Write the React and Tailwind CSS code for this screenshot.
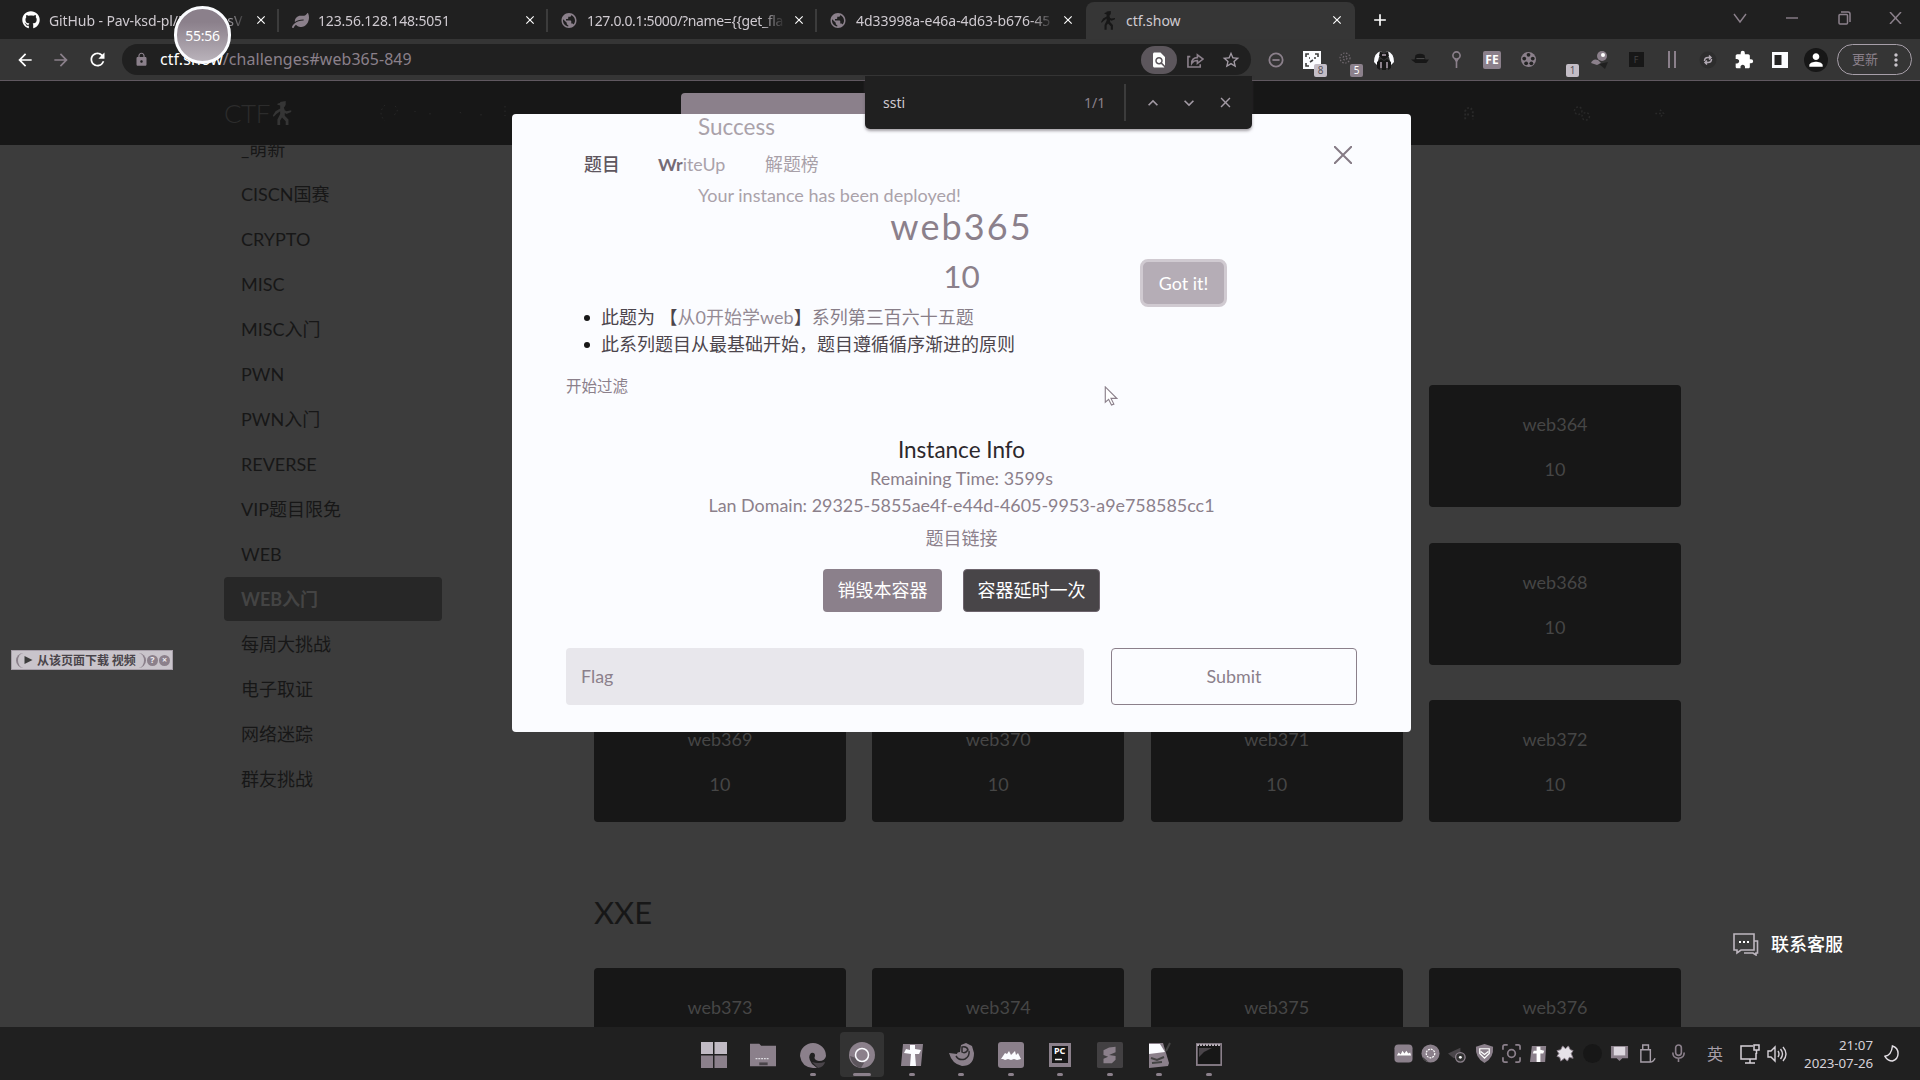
import React from "react";
import { FaGithub, FaLeaf } from "react-icons/fa";
import {
  MdPublic, MdArrowBack, MdArrowForward, MdRefresh, MdLock, MdFindInPage, MdStarBorder,
  MdExtension, MdPerson, MdClose, MdAdd, MdMoreVert, MdKeyboardArrowUp, MdKeyboardArrowDown,
} from "react-icons/md";

const Runner = ({ className }) => (
  <svg viewBox="0 0 20 26" className={className} fill="currentColor">
    <path d="M8 1l6-1v4l-1 2-1 1 1 3 2 1 5-1v2l-5 2-2-1v3l4 4v7h-3v-5l-4-4-2 3v6H5v-7l3-6v-3l-4 3-3 3-1-1 3-5 5-3V5L5 4V3l3-1z" />
  </svg>
);

const tabs = [
  { icon: <FaGithub size={18} className="text-white" />, title: "GitHub - Pav-ksd-pl/ModulesV", fit: "tracking-[-0.100px]", close: true },
  { icon: <FaLeaf size={17} className="text-[#8b808b]" />, title: "123.56.128.148:5051", fit: "tracking-[-0.180px]", close: true },
  { icon: <MdPublic size={19} className="text-[#8b808b]" />, title: "127.0.0.1:5000/?name={{get_fla", fit: "tracking-[-0.350px]", close: true },
  { icon: <MdPublic size={19} className="text-[#8b808b]" />, title: "4d33998a-e46a-4d63-b676-45", fit: "tracking-[-0.050px]", close: true },
];

function TabStrip() {
  return (
    <div className="flex h-[39px] bg-[#202020] pl-[10px]">
      {tabs.map((t, i) => (
        <div key={i} className="flex h-[39px] w-[269px] items-center pl-[12px] pt-px">
          <span className="flex w-[18px] justify-center">{t.icon}</span>
          <span className={"ml-[9px] w-[198px] overflow-hidden whitespace-nowrap text-[14px] text-[#cfcad0] [mask-image:linear-gradient(to_right,black_88%,transparent)] " + t.fit}>{t.title}</span>
          <MdClose size={14} className="ml-[7px] text-white" />
          <span className={"ml-auto h-[23px] w-[2px] " + (i < 3 ? "bg-[#3c3c3c]" : "bg-transparent")} />
        </div>
      ))}
      <div className="mt-[2px] flex h-[37px] w-[269px] items-center rounded-t-[8px] bg-[#363636] pb-px pl-[15px]">
        <Runner className="h-[20px] w-[14px] text-[#171717]" />
        <span className="ml-[11px] w-[200px] text-[14px] text-[#cfcad0]">ctf.show</span>
        <MdClose size={14} className="ml-[4px] text-white" />
      </div>
      <div className="flex w-[50px] items-center justify-center pt-px text-white"><MdAdd size={20} /></div>
      <div className="ml-auto flex h-[35px] items-center text-[#8b808b]">
        <svg className="h-[12px] w-[52px]" viewBox="-20 0 52 12" fill="none" stroke="currentColor" strokeWidth="1.400"><path d="M0 2l6 8 6-8" /></svg>
        <svg className="h-[12px] w-[52px]" viewBox="-20 0 52 12" fill="none" stroke="currentColor" strokeWidth="1.400"><path d="M0 6h12" /></svg>
        <svg className="h-[14px] w-[52px]" viewBox="-20 0 52 14" fill="none" stroke="currentColor" strokeWidth="1.500"><rect x="1" y="3.500" width="8.500" height="9.500" rx="1" /><path d="M3 1h7q2 0 2 2v8" /></svg>
        <svg className="h-[12px] w-[50px]" viewBox="-19 0 50 12" fill="none" stroke="currentColor" strokeWidth="1.500"><path d="M1 0l11 12M12 0L1 12" /></svg>
      </div>
    </div>
  );
}

const Badge = ({ children, tone }) => (
  <span className={"absolute -right-[6px] -bottom-[8px] flex h-[13px] w-[13px] items-center justify-center rounded-[2px] text-[10px] leading-none " + tone}>{children}</span>
);

const extensions = [
  <svg viewBox="0 0 18 18" className="h-[16px] w-[16px]" fill="none" stroke="#8b808b" strokeWidth="2"><circle cx="9" cy="9" r="7.500" /><path d="M5 9h8" /></svg>,
  <span className="relative h-[18px] w-[18px] bg-[#fbfcff]">
    <svg viewBox="0 0 18 18" className="h-[18px] w-[18px]" fill="none" stroke="#3c3c3c" strokeWidth="1.600"><path d="M3 6V3h3M12 3h3v3M3 12v3h3M6 7h1M11 7h2M7 11l3-2" /></svg>
    <Badge tone="bg-[#c3bdc6] text-[#5a525a]">8</Badge>
  </span>,
  <span className="relative h-[18px] w-[18px]">
    <svg viewBox="0 0 18 18" className="h-[18px] w-[18px]" fill="none" stroke="#70686f" strokeWidth="1.200" strokeDasharray="1.500 1.500"><circle cx="6" cy="7" r="5" /><circle cx="6" cy="7" r="2" /></svg>
    <Badge tone="bg-[#8b808b] text-white">5</Badge>
  </span>,
  <svg viewBox="0 0 20 20" className="h-[20px] w-[20px]"><path d="M7 1Q0 3 0 12l3 3 2-8 3-3zM13 1q7 2 7 11l-3 3-2-8-3-3z" fill="#fbfcff" /><path d="M6 1l4 3 4-3 1 5-5 4-5-4zM3 12l4-3 3 2 3-2 4 3v6l-3 2v-5h-2v5H8v-5H6v5l-3-2z" fill="#171717" /><path d="M8 4h4v2H8zM6 12h2v6H6zM12 12h2v6h-2z" fill="#8b808b" /></svg>,
  <svg viewBox="0 0 20 14" className="h-[13px] w-[18px]"><path d="M5 2q5-3 10 0l1 5h4l-3 4H5L0 7h4z" fill="#171717" /><path d="M6 6h9" stroke="#555" /></svg>,
  <svg viewBox="0 0 12 20" className="h-[18px] w-[11px]" fill="none" stroke="#8b808b" strokeWidth="1.800"><circle cx="6" cy="5" r="4" /><path d="M4 8l2 4 2-4M6 11v8" /></svg>,
  <span className="flex h-[18px] w-[18px] items-center justify-center rounded-[2px] bg-[#8b808b] text-[12px] font-bold leading-none text-white">FE</span>,
  <svg viewBox="0 0 18 18" className="h-[17px] w-[17px]"><circle cx="9" cy="9" r="8" fill="#8b808b" /><g fill="#242424"><circle cx="9" cy="4" r="2" /><circle cx="4.500" cy="8" r="2" /><circle cx="13.500" cy="8" r="2" /><circle cx="6.500" cy="13" r="2" /><circle cx="12" cy="13" r="2" /></g></svg>,
  <span className="relative h-[18px] w-[18px]"><Badge tone="bg-[#c3bdc6] text-[#5a525a]">1</Badge></span>,
  <svg viewBox="0 0 18 18" className="h-[18px] w-[18px]"><circle cx="11" cy="5" r="5" fill="#8b808b" /><path d="M0 12q2-5 7-3l3 3-4 2z" fill="#8b808b" /><path d="M8 13l9-2-3 7z" fill="#202020" /><circle cx="12" cy="4" r="2" fill="#fff" /></svg>,
  <span className="flex h-[15px] w-[15px] items-center justify-center bg-[#171717] text-[9px] text-[#444]">F</span>,
  <span className="flex gap-[4px]"><i className="h-[17px] w-[2px] bg-[#8b808b]" /><i className="h-[17px] w-[2px] bg-[#8b808b]" /></span>,
  <svg viewBox="0 0 18 18" className="h-[18px] w-[18px]"><circle cx="9" cy="9" r="8.500" fill="#2d2d2d" /><path d="M5.500 10q0-3.500 3.500-3.500h3M12.500 8q0 3.500-3.500 3.500H6M10 4.500l2 2-2 2M8 13.500l-2-2 2-2" fill="none" stroke="#b0a8b2" strokeWidth="1.500" /></svg>,
  <MdExtension size={20} className="text-white" />,
  <svg viewBox="0 0 18 18" className="h-[18px] w-[18px]"><path d="M1 1h16v16H1z" fill="#fbfcff" /><path d="M3.500 4h7v10h-7z" fill="#242424" /></svg>,
  <span className="flex h-[24px] w-[24px] items-center justify-center rounded-full bg-[#171717]"><MdPerson size={20} className="text-white" /></span>,
];

function Toolbar() {
  return (
    <div className="flex h-[42px] items-center border-b border-[#605860] bg-[#353535] pl-[6px]">
      <span className="flex w-[37px] justify-center"><MdArrowBack size={20} className="text-white" /></span>
      <span className="flex w-[36px] justify-center"><MdArrowForward size={20} className="text-[#8b808b]" /></span>
      <span className="flex w-[36px] justify-center"><MdRefresh size={21} className="text-white" /></span>
      <div className="ml-[7px] flex h-[31px] w-[1129px] items-center rounded-full bg-[#202020] pl-[12px]">
        <MdLock size={15} className="text-[#8b808b]" />
        <span className="ml-[11px] text-[15.900px] tracking-[0.100px] text-[#8b808b]"><span className="text-white">ctf.show</span>/challenges#web365-849</span>
        <span className="ml-auto flex h-[28px] w-[36px] items-center justify-center rounded-full bg-[#5c565c] text-white"><MdFindInPage size={18} /></span>
        <span className="flex w-[36px] justify-center">
          <svg viewBox="0 0 18 18" className="h-[17px] w-[17px]" fill="none" stroke="#8b808b" strokeWidth="1.700"><path d="M3.500 6H1v11h13v-3M5 13q0-6 6-6V4l6 4.500-6 4.500V10q-4 0-6 3z" /></svg>
        </span>
        <span className="mr-[2px] flex w-[36px] justify-center"><MdStarBorder size={20} className="text-[#a29aa4]" /></span>
      </div>
      <div className="ml-[7px] flex">
        {extensions.map((e, i) => (
          <span key={i} className="flex h-[30px] w-[36px] items-center justify-center">{e}</span>
        ))}
      </div>
      <div className="ml-[3px] flex h-[31px] w-[75px] items-center rounded-full border border-[#a79fa9] pl-[14px] text-[13px] text-[#8b808b]">
        更新<MdMoreVert size={20} className="ml-[8px] text-[#c9c4cb]" />
      </div>
    </div>
  );
}

const categories = ["_萌新", "CISCN国赛", "CRYPTO", "MISC", "MISC入门", "PWN", "PWN入门", "REVERSE", "VIP题目限免", "WEB", "WEB入门", "每周大挑战", "电子取证", "网络迷踪", "群友挑战"];

const Card = ({ name, className = "" }) => (
  <div className={"h-[122px] rounded-[4px] bg-[#171717] pt-[25px] text-center text-[18px] text-[#464646] " + className}>
    <div className="h-[28px] leading-[28px]">{name}</div>
    <div className="mt-[17px] h-[28px] leading-[28px]">10</div>
  </div>
);

function Site() {
  return (
    <div className="h-[946px] overflow-hidden bg-[#3c3c3c] font-['Lato','Noto_Sans_CJK_SC',sans-serif]">
      <nav className="flex h-[64px] items-center bg-[#171717] pl-[224px] text-[#353535]">
        <span className="text-[26px] font-light tracking-[-0.500px] text-[#2c2c2c]">CTF</span>
        <Runner className="ml-[2px] h-[24px] w-[20px]" />
        <svg viewBox="0 0 130 20" className="ml-[85px] h-[20px] w-[130px]" fill="none" stroke="#2b2b2b" strokeDasharray="1.500 3"><path d="M8 2q-8 8 0 16M18 3q5 5-1 9M38 8v1M53 10v3M83 9l2 3M104 11v2M128 3v10" /></svg>
        <div className="ml-auto mr-[255px] flex gap-[36px] text-[#292929]">
          <svg viewBox="0 0 12 16" className="mr-[62px] h-[15px] w-[12px]" fill="none" stroke="currentColor" strokeWidth="2" strokeDasharray="2 2"><path d="M2 14V5q4-6 8 0v9M4 9h4" /></svg>
          <svg viewBox="0 0 18 16" className="h-[15px] w-[18px]" fill="none" stroke="currentColor" strokeWidth="1.500" strokeDasharray="2 2"><circle cx="5" cy="5" r="4" /><circle cx="13" cy="11" r="4" /></svg>
          <svg viewBox="0 0 12 16" className="ml-[26px] h-[15px] w-[12px]" fill="none" stroke="currentColor" strokeWidth="1.500" strokeDasharray="2 2"><path d="M2 8h8M7 4l4 4-4 4" /></svg>
        </div>
      </nav>
      <div className="flex h-[882px] overflow-hidden pl-[224px]">
        <aside className="-mt-[18px] flex w-[218px] flex-col gap-px text-[18px] text-[#171717]">
          {categories.map((c) => (
            <div key={c} className={"flex h-[44px] shrink-0 items-center rounded-[4px] pl-[17px] pt-px " + (c === "WEB入门" ? "bg-[#272727] font-bold text-[#444444]" : "")}>{c}</div>
          ))}
        </aside>
        <main className="ml-[152px] w-[1087px] pt-[240px]">
          <div className="grid grid-cols-4 gap-x-[26.500px] gap-y-[35.500px]">
            <Card name="web364" className="col-start-4" />
            <Card name="web368" className="col-start-4" />
            {["web369", "web370", "web371", "web372"].map((n) => <Card key={n} name={n} />)}
          </div>
          <h3 className="mt-[65px] h-[50px] text-[31px] leading-[50px] text-[#171717]">XXE</h3>
          <div className="mt-[31px] grid grid-cols-4 gap-x-[26.500px]">
            {["web373", "web374", "web375", "web376"].map((n) => (
              <div key={n} className="h-[59px] rounded-t-[4px] bg-[#171717] pt-[25px] text-center text-[18px] leading-[28px] text-[#464646]">{n}</div>
            ))}
          </div>
        </main>
      </div>
    </div>
  );
}

function Modal() {
  return (
    <div className="absolute left-[512px] top-[114px] h-[618px] w-[899px] rounded-[4px] bg-[#fbfcff] px-[54px] pt-[26px] font-['Lato','Noto_Sans_CJK_SC',sans-serif] text-[17.900px] text-[#8b808b]">
      <div className="flex h-[48px] items-center pl-[18px] pt-px">
        <span className="w-[74px] font-medium text-[#5e565e]">题目</span>
        <span className="w-[107px] text-[#aaa2aa]"><b className="text-[#756b75]">Wr</b>iteUp</span>
        <span className="text-[#a8a0a8]">解题榜</span>
        <svg viewBox="0 0 18 18" className="mb-[20px] ml-auto mr-[5px] h-[18px] w-[18px]" fill="none" stroke="#857a85" strokeWidth="2"><path d="M0 0l18 18M18 0L0 18" /></svg>
      </div>
      <h2 className="mt-4 h-12 text-center text-[36px] leading-[45px] tracking-[2.100px]">web365</h2>
      <h3 className="h-12 text-center text-[31.500px] leading-[48px]">10</h3>
      <ul className="mt-1 pl-[35px] text-[18px] leading-[27px] text-[#4c454c]">
        <li className="relative before:absolute before:-left-[17px] before:top-[11px] before:h-[6px] before:w-[6px] before:rounded-full before:bg-[#171717]">此题为 【<span className="text-[#958b95]">从0开始学web</span>】<span className="text-[#887e88]">系列第三百六十五题</span></li>
        <li className="relative before:absolute before:-left-[17px] before:top-[11px] before:h-[6px] before:w-[6px] before:rounded-full before:bg-[#171717]">此系列题目从最基础开始，题目遵循循序渐进的原则</li>
      </ul>
      <p className="mt-[14px] h-7 text-[15.500px] leading-7">开始过滤</p>
      <h5 className="mt-[36px] h-7 text-center text-[22.500px] leading-7 text-[#2c282c]">Instance Info</h5>
      <p className="h-7 text-center leading-[29px]">Remaining Time: 3599s</p>
      <p className="h-[26px] text-center leading-[26px]">Lan Domain: 29325-5855ae4f-e44d-4605-9953-a9e758585cc1</p>
      <p className="mt-[7px] h-[26px] text-center text-[18px] leading-[26px]">题目链接</p>
      <div className="mt-[18px] flex h-[43px] justify-center gap-[21px] text-[18px] text-white">
        <button className="w-[119px] rounded-[4px] bg-[#8b808b]">销毁本容器</button>
        <button className="w-[137px] rounded-[4px] border border-[#6d646d] bg-[#484548]">容器延时一次</button>
      </div>
      <div className="mt-[36px] flex h-[57px] gap-[27px]">
        <div className="flex w-[518px] items-center rounded-[4px] bg-[#e8e7ec] pl-[15px]">Flag</div>
        <button className="w-[246px] rounded-[4px] border border-[#8b808b]">Submit</button>
      </div>
    </div>
  );
}

function Toast() {
  return (
    <>
      <div className="absolute left-[681px] top-[93px] h-[21px] w-[184px] rounded-tl-[4px] bg-[#8b808b]" />
      <div className="absolute left-[698px] top-[113px] w-[530px] font-['Lato',sans-serif] text-[#aaa2aa]">
        <div className="h-[28px] text-[22.500px] leading-[28px]">Success</div>
        <div className="mt-[40px] h-[28px] text-[18px] leading-[28px]">Your instance has been deployed!</div>
        <div className="ml-auto mr-[1px] mt-[50px] flex h-[48px] w-[87px] items-center justify-center rounded-[8px] border-[3px] border-[#d0cad1] bg-[#b5adb6] pt-px text-[17.900px] text-white">Got it!</div>
      </div>
    </>
  );
}

function FindBar() {
  return (
    <div className="absolute left-[865px] top-[76px] flex h-[53px] w-[387px] items-center rounded-b-[5px] bg-[#202020] pl-[18px] text-[14px] text-[#a29aa4] shadow-[0_2px_3px_rgba(80,72,80,0.5)]">
      <span className="w-[201px] text-[#cfcad0]">ssti</span>
      <span className="w-[40px] text-[#8b808b]">1/1</span>
      <span className="h-[37px] w-[2px] bg-[#3c3c3c]" />
      <MdKeyboardArrowUp size={20} className="ml-[17px]" />
      <MdKeyboardArrowDown size={20} className="ml-[16px]" />
      <MdClose size={17} className="ml-[18px]" />
    </div>
  );
}

const P = "#8b808b";
const apps = [
  <svg viewBox="0 0 26 26"><path d="M0 0h12v12H0zM13.500 0H26v12H13.500z" fill="#c0bac3" /><path d="M0 13.500h12V26H0zM13.500 13.500H26V26H13.500z" fill={P} /></svg>,
  <svg viewBox="0 0 28 26"><path d="M0 1h10l2 2h16v22H0z" fill={P} /><path d="M6 17h15" stroke="#fbfcff" strokeDasharray="2 1" /><path d="M10 21h9v3h-9z" fill="#4a454a" /></svg>,
  <svg viewBox="0 0 26 26"><path d="M0 14A13 13 0 1 1 26 14q-1 5-7 5-6-1-4-5 0-4-4-3-4 4 1 11l5 4Q2 27 0 14z" fill={P} /><path d="M12 20l6 6q6-1 7-6-7 2-13 0z" fill="#4a454a" /></svg>,
  <svg viewBox="0 0 26 26"><circle cx="13" cy="13" r="13" fill={P} /><path d="M1 14q2 10 11 12l3-5-8-5z" fill="#5c555c" /><circle cx="13" cy="13" r="6.500" fill={P} stroke="#fbfcff" strokeWidth="1.500" /></svg>,
  <svg viewBox="0 0 26 26"><path d="M4 2h20l-2 22H2z" fill={P} /><path d="M11 3h5v4l6 1-2 4h-4l1 12h-6l1-12-7-1 2-4 4 1z" fill="#fbfcff" /></svg>,
  <svg viewBox="0 0 26 26"><path d="M1 11l8 1q0-2 3-2l1-7 5-2 6 3 2 7q0 13-12 13Q4 22 1 11z" fill={P} /><path d="M8 14q3 5 9 3 5-3 4-8M14 5q5-1 6 3-3 4-6 2z" fill="none" stroke="#2c2a2c" strokeWidth="1.500" /></svg>,
  <svg viewBox="0 0 26 26"><rect width="26" height="26" rx="3" fill={P} /><path d="M3 17l4-6 2 1 2-3 2 4 4-4 1 4 2-2 3 6-4 1-3-1-3 1-3-1-3 1-2-1z" fill="#fbfcff" /></svg>,
  <svg viewBox="0 0 26 26"><rect x="2" y="1" width="22" height="24" fill={P} /><rect x="5" y="4" width="16" height="17" fill="#171717" /><text x="7" y="12" fontSize="9" fontWeight="700" fill="#fff">PC</text><path d="M8 17.500h7" stroke="#fff" strokeWidth="1.500" /></svg>,
  <svg viewBox="0 0 28 28"><rect width="28" height="28" rx="2" fill="#424042" /><path d="M20 5v6l-7 3 7 1v4l-4 4H7v-5l5-2-5-2V9l6-3z" fill={P} /></svg>,
  <svg viewBox="0 0 26 26"><path d="M3 1h14l6 20-1 3-19 2z" fill={P} /><path d="M3 2h11l5 8-16 2z" fill="#fbfcff" /><path d="M5 16l6 2 7-3M6 21l10-1M20 9l4-8" fill="none" stroke="#444" strokeWidth="2" /></svg>,
  <svg viewBox="0 0 26 26"><rect x=".8" y="2" width="24.500" height="21" fill="#171717" stroke={P} strokeWidth="1.800" /><path d="M1 3h24" stroke="#b5adb6" strokeWidth="2" strokeDasharray="2 1" /><path d="M3 6h13l-8 4-5 5z" fill="#4a454a" /></svg>,
];

const tray = [
  <svg viewBox="0 0 20 20"><rect x=".5" y=".5" width="19" height="19" rx="4" fill={P} /><path d="M3 12l2-3 2 2 2-4 2 3 2-3 2 3 2-1 1 3z" fill="#fff" /></svg>,
  <svg viewBox="0 0 20 20"><circle cx="10" cy="10" r="9.500" fill={P} /><circle cx="10" cy="10" r="4.500" fill="none" stroke="#fff" strokeWidth="1.300" strokeDasharray="2 1" /><path d="M1 13l7 6q-6-1-7-6z" fill="#444" /></svg>,
  <svg viewBox="0 0 20 20"><path d="M0 10l13-6v8l-7 3z" fill="#4a464a" /><circle cx="13" cy="14" r="5" fill="#333" stroke={P} strokeWidth="1.400" /><circle cx="13" cy="14" r="1.500" fill="#fff" /></svg>,
  <svg viewBox="0 0 20 20"><path d="M10 0l9 3q1 12-9 17Q0 15 1 3z" fill={P} /><path d="M5 5h10v5l-5 5-5-5zM6 8l4 3 4-3" fill="none" stroke="#fff" strokeWidth="1.300" /></svg>,
  <svg viewBox="0 0 20 20" fill="none" stroke={P} strokeWidth="1.800"><path d="M1 6V3q0-2 2-2h3M14 1h3q2 0 2 2v3M19 14v3q0 2-2 2h-3M6 19H3q-2 0-2-2v-3" /><circle cx="10" cy="10" r="4" /></svg>,
  <svg viewBox="0 0 20 20"><path d="M3 2h15l-1 17H1z" fill={P} /><path d="M8 3h4v3l4 1-1 3h-3v9H8v-9H4l1-3h3z" fill="#fff" /></svg>,
  <svg viewBox="0 0 20 20"><path d="M7 2l3 3 3-3 2 4 3 1-2 3 2 5-4-1-2 4-3-3-4 3-1-4-3-1 2-3-2-3 4-1z" fill="#e6e2e8" stroke={P} strokeWidth="1" /></svg>,
  <svg viewBox="0 0 20 20"><circle cx="10" cy="10" r="10" fill="#171717" /></svg>,
  <svg viewBox="0 0 20 20"><path d="M1 2h18v13h-6l-3 3-3-3H1z" fill={P} /><path d="M4 3h12v9H4z" fill="#ddd8df" /></svg>,
  <svg viewBox="0 0 20 20" fill="none" stroke="#a79fa9" strokeWidth="1.500"><path d="M5 1h6v5H5zM3 6h10v13H3zM13 19q3 0 5-4" /></svg>,
  <svg viewBox="0 0 20 20" fill="none" stroke={P} strokeWidth="1.700"><rect x="7" y="1" width="6" height="11" rx="3" /><path d="M4 9q0 6 6 6t6-6M10 15v4" /></svg>,
];

function Taskbar() {
  return (
    <div className="flex h-[53px] items-center bg-[#202020]">
      <div className="ml-[689px] flex h-[53px]">
        {apps.map((a, i) => (
          <div key={i} className="flex h-[53px] w-[49.500px] justify-center pt-[5px]">
            <div className={"flex h-[45px] w-[44px] flex-col items-center rounded-[4px] pt-[10px] " + (i === 3 ? "bg-[#333333]" : "")}>
              <div className="h-[26px] w-[26px] [&>svg]:h-full [&>svg]:w-full">{a}</div>
              {i > 1 && <span className={"mt-[5px] h-[3px] rounded-full bg-[#8b808b] " + (i === 3 ? "w-[18px]" : "w-[6px]")} />}
            </div>
          </div>
        ))}
      </div>
      <div className="ml-auto flex items-center">
        {tray.map((icon, i) => (
          <span key={i} className={"flex justify-center [&>svg]:h-[19px] [&>svg]:w-[19px] " + (i === 9 ? "w-[29px]" : i === 10 ? "w-[33px]" : "w-[27px]")}>{icon}</span>
        ))}
        <span className="flex w-[40px] justify-center text-[16px] text-[#a79fa9]">英</span>
        <svg viewBox="0 0 20 20" className="ml-[5px] h-[20px] w-[20px]" fill="none" stroke="#d6d1d8" strokeWidth="1.500"><path d="M13 2H1v13h15V9M5 19h10M10 15v4M14 1h5v5h-5zM16.500 6v4" /></svg>
        <svg viewBox="0 0 20 20" className="ml-[7px] h-[20px] w-[20px]" fill="none" stroke="#d6d1d8" strokeWidth="1.400"><path d="M1 7h3l4-4v14l-4-4H1zM11 7q2 3 0 6M13.500 5q4 5 0 10M16 3q6 7 0 14" /></svg>
        <div className="ml-[9px] w-[77px] text-right text-[13.300px] leading-[18px] text-[#d6d1d8]"><div>21:07</div><div className="whitespace-nowrap tracking-[-0.050px]">2023-07-26</div></div>
        <svg viewBox="0 0 16 18" className="ml-[11px] mr-[21px] h-[17px] w-[15px]" fill="none" stroke="#e6e2e8" strokeWidth="1.500"><path d="M9 1q-1 10-8 11 3 5 8 5 6-2 6-8 0-6-6-8z" /></svg>
      </div>
    </div>
  );
}

export default function App() {
  return (
    <div className="relative h-[1080px] w-[1920px] overflow-hidden bg-[#202020] font-['Noto_Sans','Noto_Sans_CJK_SC',sans-serif]">
      <TabStrip />
      <Toolbar />
      <Site />
      <Taskbar />
      <Modal />
      <Toast />
      <FindBar />
      <div className="absolute left-[174px] top-[6px] flex h-[58px] w-[57px] items-center justify-center rounded-full border-[3px] border-[#fbfcff] bg-[linear-gradient(#8b808b_25%,#b9b2ba)] text-[14px] tracking-[-0.300px] text-white">55:56</div>
      <div className="absolute left-[11px] top-[650px] flex h-[20px] w-[162px] items-center border border-[#a79fa9] bg-[#c9c4cb] text-[12px] font-bold text-[#4a444a]">
        <span className="ml-[4px] flex h-[15px] w-[130px] items-center rounded-full border-x-2 border-[#8b808b] pl-[6px] font-['Noto_Sans_CJK_SC',sans-serif] leading-none"><svg viewBox="0 0 8 8" className="mr-[4px] h-[8px] w-[9px] shrink-0" fill="#3c3c3c"><path d="M0 0l8 4-8 4z" /></svg><span className="whitespace-nowrap">从该页面下载 视频</span></span>
        <span className="ml-[1px] flex h-[11px] w-[11px] items-center justify-center rounded-full bg-[#8b808b] text-[9px] text-[#eeebf0]">?</span>
        <span className="ml-[1px] flex h-[11px] w-[11px] items-center justify-center rounded-full bg-[#8b808b] text-[9px] text-[#eeebf0]">×</span>
      </div>
      <div className="absolute left-[1733px] top-[930px] flex h-[28px] items-center text-[18px] font-medium text-white">
        <svg viewBox="0 0 26 23" className="h-[23px] w-[26px]" fill="none" stroke="#bdb6bf" strokeWidth="1.600"><path d="M1 1h20v16H8l-4 3v-3H1zM21 8h3.500v12H23v2l-3-2h-9" /><path d="M6 9h2M10 9h2M14 9h2" stroke="#fff" strokeWidth="2.200" /></svg>
        <span className="ml-[12px]">联系客服</span>
      </div>
      <svg viewBox="0 0 14 21" className="absolute left-[1104px] top-[386px] h-[20px] w-[14px]" fill="#fff" stroke="#8b808b" strokeWidth="1.200"><path d="M1 1v16l3.500-3 3 6 2.500-1-3-6H13z" /></svg>
    </div>
  );
}
